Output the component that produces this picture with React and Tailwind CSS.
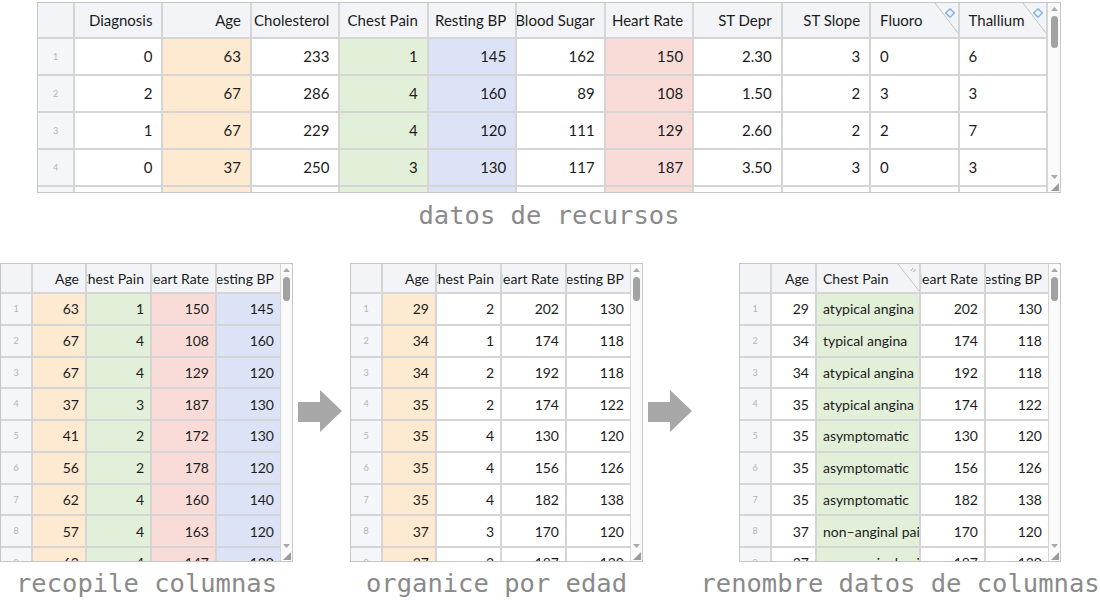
import React from "react";

const ORANGE = "bg-[#fdead0]";
const GREEN = "bg-[#e2efd9]";
const BLUE = "bg-[#dde3f6]";
const PINK = "bg-[#f9dcd8]";

const BlueCorner = () => (
  <svg className="absolute right-0 top-0" width="24" height="32" viewBox="0 0 24 32">
    <line x1="1" y1="0" x2="24" y2="30" stroke="#c2c2c2" strokeWidth="1" />
    <rect x="13" y="7" width="6" height="6" transform="rotate(45 16 10)" fill="none" stroke="#7fb2e5" strokeWidth="1.4" />
  </svg>
);

const GripCorner = () => (
  <svg className="absolute right-0 top-0" width="22" height="28" viewBox="0 0 22 28">
    <line x1="1" y1="0" x2="22" y2="27" stroke="#c2c2c2" strokeWidth="1" />
    <line x1="14" y1="7" x2="16" y2="4" stroke="#b0b0b0" strokeWidth="1" />
    <line x1="16.5" y1="8" x2="18.5" y2="5" stroke="#b0b0b0" strokeWidth="1" />
  </svg>
);

// 📊 fake scrollbar on the right of each sheet
const Scrollbar = ({ w, thumb }) => (
  <div className={`${w} shrink-0 bg-[#fafafa] flex flex-col items-center pt-[4px] pb-[1px]`}>
    <svg width="7" height="4" viewBox="0 0 7 4">
      <polygon points="0,4 3.5,0 7,4" fill="#a8a8a8" />
    </svg>
    <div className={`${thumb} w-[7px] mt-[5px] rounded-full bg-[#a2a2a2]`} />
    <div className="flex-1" />
    <svg width="7" height="4" viewBox="0 0 7 4">
      <polygon points="0,0 3.5,4 7,0" fill="#a8a8a8" />
    </svg>
    <div className="self-end mt-[4px] mr-[1px]">
      <svg width="8" height="8" viewBox="0 0 8 8">
        <polygon points="8,0 8,8 0,8" fill="#9a9a9a" />
      </svg>
    </div>
  </div>
);

const Sheet = ({ cols, rows, size, idxW, headH, rowH, pad, scrollW, thumb, trail }) => (
  <div className={`${size} border border-[#c6c6c6] bg-white flex overflow-hidden`}>
    <div className={`flex-1 min-w-0 overflow-hidden bg-[#d5d5d5] flex flex-col gap-[2px] ${trail}`}>
      {/* header */}
      <div className={`flex gap-[2px] ${headH} shrink-0`}>
        <div className={`${idxW} shrink-0 bg-[#f3f4f8]`} />
        {cols.map((c) => (
          <div
            key={c.label}
            className={`${c.w} relative bg-[#f3f4f8] flex items-center overflow-hidden ${pad} ${
              c.left ? "justify-start" : "justify-end"
            }`}
          >
            <span className="shrink-0 whitespace-nowrap">{c.label}</span>
            {c.corner === "blue" && <BlueCorner />}
            {c.corner === "grip" && <GripCorner />}
          </div>
        ))}
      </div>

      {/* rows */}
      {rows.map((r, i) => (
        <div key={i} className={`flex gap-[2px] ${rowH} shrink-0`}>
          <div className={`${idxW} shrink-0 bg-[#f5f6fa] flex items-center justify-center text-[9px] text-[#b4b4b4]`}>
            {i + 1}
          </div>
          {cols.map((c, j) => (
            <div
              key={j}
              className={`${c.w} ${c.bg || "bg-white"} flex items-center overflow-hidden ${pad} ${
                c.left ? "justify-start" : "justify-end"
              }`}
            >
              <span className="shrink-0 whitespace-nowrap">{r[j]}</span>
            </div>
          ))}
        </div>
      ))}
    </div>
    <Scrollbar w={scrollW} thumb={thumb} />
  </div>
);

const Arrow = ({ ml }) => (
  <div className={`${ml} mt-[127px] shrink-0`}>
    <svg width="44" height="42" viewBox="0 0 44 42">
      <polygon points="0,12 22,12 22,0 44,21 22,42 22,32 0,32" fill="#a7a7a7" />
    </svg>
  </div>
);

const Caption = ({ children, mt }) => (
  <div
    className={`${mt} whitespace-nowrap text-[25.5px] leading-[30px] text-[#8a8a8a]`}
    style={{ fontFamily: '"DejaVu Sans Mono", "Liberation Mono", monospace' }}
  >
    {children}
  </div>
);

const F = "flex-1 basis-0 min-w-0";

const topCols = [
  { label: "Diagnosis", w: F },
  { label: "Age", w: F, bg: ORANGE },
  { label: "Cholesterol", w: F },
  { label: "Chest Pain", w: F, bg: GREEN },
  { label: "Resting BP", w: F, bg: BLUE },
  { label: "Blood Sugar", w: F },
  { label: "Heart Rate", w: F, bg: PINK },
  { label: "ST Depr", w: F },
  { label: "ST Slope", w: F },
  { label: "Fluoro", w: F, left: true, corner: "blue" },
  { label: "Thallium", w: F, left: true, corner: "blue" },
];

const topRows = [
  [0, 63, 233, 1, 145, 162, 150, "2.30", 3, 0, 6],
  [2, 67, 286, 4, 160, 89, 108, "1.50", 2, 3, 3],
  [1, 67, 229, 4, 120, 111, 129, "2.60", 2, 2, 7],
  [0, 37, 250, 3, 130, 117, 187, "3.50", 3, 0, 3],
  [0, 41, 204, 2, 130, 0, 172, "1.40", 1, 0, 3],
];

const colsA = [
  { label: "Age", w: "w-[52px] shrink-0", bg: ORANGE },
  { label: "Chest Pain", w: "w-[63px] shrink-0", bg: GREEN },
  { label: "Heart Rate", w: "w-[63px] shrink-0", bg: PINK },
  { label: "Resting BP", w: "w-[63px] shrink-0", bg: BLUE },
];

const rowsA = [
  [63, 1, 150, 145],
  [67, 4, 108, 160],
  [67, 4, 129, 120],
  [37, 3, 187, 130],
  [41, 2, 172, 130],
  [56, 2, 178, 120],
  [62, 4, 160, 140],
  [57, 4, 163, 120],
  [63, 4, 147, 130],
];

const colsB = [
  { label: "Age", w: "w-[52px] shrink-0", bg: ORANGE },
  { label: "Chest Pain", w: "w-[63px] shrink-0" },
  { label: "Heart Rate", w: "w-[63px] shrink-0" },
  { label: "Resting BP", w: "w-[63px] shrink-0" },
];

const rowsB = [
  [29, 2, 202, 130],
  [34, 1, 174, 118],
  [34, 2, 192, 118],
  [35, 2, 174, 122],
  [35, 4, 130, 120],
  [35, 4, 156, 126],
  [35, 4, 182, 138],
  [37, 3, 170, 120],
  [37, 3, 187, 130],
];

const colsC = [
  { label: "Age", w: "w-[43px] shrink-0" },
  { label: "Chest Pain", w: "w-[102px] shrink-0", bg: GREEN, left: true, corner: "grip" },
  { label: "Heart Rate", w: "w-[63px] shrink-0" },
  { label: "Resting BP", w: "w-[62px] shrink-0" },
];

const rowsC = [
  [29, "atypical angina", 202, 130],
  [34, "typical angina", 174, 118],
  [34, "atypical angina", 192, 118],
  [35, "atypical angina", 174, 122],
  [35, "asymptomatic", 130, 120],
  [35, "asymptomatic", 156, 126],
  [35, "asymptomatic", 182, 138],
  [37, "non–anginal pain", 170, 120],
  [37, "non–anginal pain", 187, 130],
];

const small = {
  idxW: "w-[30px]",
  headH: "h-[28px]",
  rowH: "h-[29.75px]",
  pad: "px-[6px]",
  scrollW: "w-[11px]",
  thumb: "h-[24px]",
  trail: "",
};

export default function App() {
  return (
    <div
      className="w-[1100px] h-[600px] bg-white overflow-hidden text-[#1c1c1c]"
      style={{ fontFamily: 'Lato, "Noto Sans", sans-serif' }}
    >
      {/* source data */}
      <div className="pt-[2px] pl-[37px] flex flex-col items-center w-[1061px]">
        <div className="text-[15px]">
          <Sheet
            cols={topCols}
            rows={topRows}
            size="w-[1024px] h-[191px]"
            idxW="w-[35px]"
            headH="h-[34px]"
            rowH="h-[35px]"
            pad="px-[9px]"
            scrollW="w-[12px]"
            thumb="h-[32px]"
            trail="pr-[2px]"
          />
        </div>
        <Caption mt="mt-[7px]">datos de recursos</Caption>
      </div>

      {/* steps */}
      <div className="mt-[33px] flex items-start text-[14px]">
        <div className="flex flex-col items-center">
          <Sheet cols={colsA} rows={rowsA} {...small} size="w-[293px] h-[299px]" />
          <Caption mt="mt-[6px]">recopile columnas</Caption>
        </div>

        <Arrow ml="ml-[5px]" />

        <div className="ml-[8px] flex flex-col items-center">
          <Sheet cols={colsB} rows={rowsB} {...small} size="w-[293px] h-[299px]" />
          <Caption mt="mt-[6px]">organice por edad</Caption>
        </div>

        <Arrow ml="ml-[5px]" />

        <div className="ml-[47px] flex flex-col items-center w-[322px]">
          <Sheet cols={colsC} rows={rowsC} {...small} size="w-[322px] h-[299px]" />
          <Caption mt="mt-[6px]">renombre datos de columnas</Caption>
        </div>
      </div>
    </div>
  );
}
